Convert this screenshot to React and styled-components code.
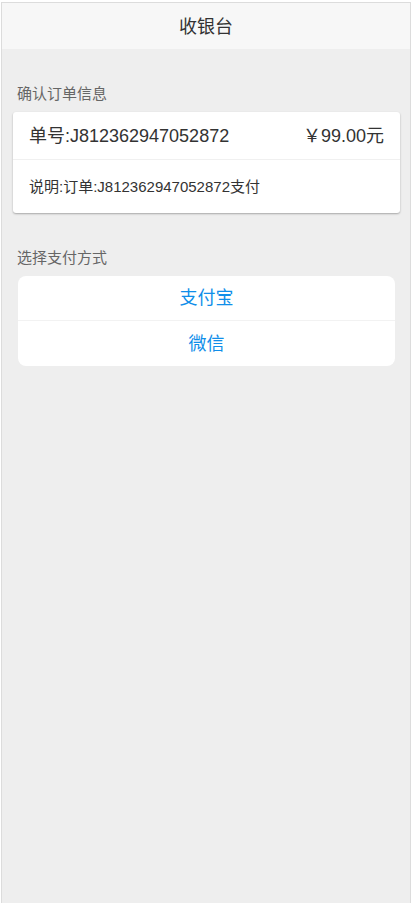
import React from "react";
import styled, { createGlobalStyle } from "styled-components";

const Global = createGlobalStyle`
  html, body { margin: 0; padding: 0; background: #fff; }
  body { font-family: "Liberation Sans", Arial, "Noto Sans CJK SC", sans-serif; }
  * { box-sizing: border-box; }
`;

const Frame = styled.div`
  margin: 2px 2px 0 1px;
  width: 410px;
  min-height: calc(100vh - 2px);
  border: 1px solid #dcdcdc;
  border-bottom: none;
  background: #eeeeee;
`;

const Header = styled.header`
  height: 46px;
  padding-bottom: 2px;
  background: #f7f7f7;
  display: flex;
  align-items: center;
  justify-content: center;
  font-size: 18px;
  color: #333;
`;

const SectionLabel = styled.div`
  padding: ${(p) => p.$top}px 15px 0 15px;
  margin-bottom: 8px;
  line-height: 20px;
  font-size: 15px;
  color: #666;
`;

const OrderCard = styled.div`
  margin: 0 10px 0 11px;
  background: #fff;
  border-radius: 3px;
  box-shadow: 0 1px 2px rgba(0, 0, 0, 0.3);
`;

const OrderRow = styled.div`
  height: 48px;
  padding: 0 16px 4px;
  display: flex;
  align-items: center;
  justify-content: space-between;
  font-size: 18px;
  color: #333;
  border-bottom: 1px solid #f0f0f0;
`;

const NoteRow = styled.div`
  height: 53px;
  padding: 0 16px 3px;
  display: flex;
  align-items: center;
  font-size: 15px;
  color: #333;
`;

const PayList = styled.div`
  margin: 0 15px 0 16px;
  background: #fff;
  border-radius: 8px;
  overflow: hidden;
`;

const PayOption = styled.div`
  height: ${(p) => (p.$first ? 44 : 46)}px;
  padding-bottom: 4px;
  display: flex;
  align-items: center;
  justify-content: center;
  font-size: 18px;
  color: #108ee9;
  cursor: pointer;
  border-top: ${(p) => (p.$first ? "none" : "1px solid #f2f2f2")};
`;

export default function App() {
  return (
    <>
      <Global />
      <Frame>
        <Header>收银台</Header>
        <SectionLabel $top={35}>确认订单信息</SectionLabel>
        <OrderCard>
          <OrderRow>
            <span>单号:J812362947052872</span>
            <span>￥99.00元</span>
          </OrderRow>
          <NoteRow>说明:订单:J812362947052872支付</NoteRow>
        </OrderCard>
        <SectionLabel $top={35}>选择支付方式</SectionLabel>
        <PayList>
          <PayOption $first>支付宝</PayOption>
          <PayOption>微信</PayOption>
        </PayList>
      </Frame>
    </>
  );
}
